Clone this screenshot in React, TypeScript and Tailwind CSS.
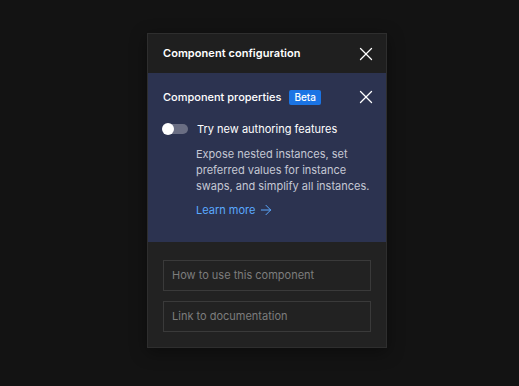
import { X, ArrowRight } from 'lucide-react';

const CloseButton = () => (
  <button className="w-6 h-6 flex items-center justify-center text-white -mr-[6px]">
    <X className="w-[22px] h-[22px]" strokeWidth={1.35} />
  </button>
);

export default function App() {
  return (
    <div
      className="w-[519px] h-[386px] bg-[#131313] pt-[33px] pl-[147px]"
      style={{ fontFamily: 'Inter, "Noto Sans", sans-serif' }}
    >
      <div className="w-[240px] bg-[#222222] border border-[#2e2e2e] shadow-[0_4px_16px_rgba(0,0,0,0.4)]">
        {/* Header */}
        <div className="h-[39px] flex items-center justify-between pl-[15px] pr-[14px] bg-[#1f1f1f]">
          <span className="text-[11px] font-semibold text-white tracking-[0.005em]">Component configuration</span>
          <CloseButton />
        </div>

        {/* Beta notice */}
        <div className="bg-[#2c3350] pl-[15px] pr-[14px] pt-[16px] pb-[24px]">
          <div className="h-4 flex items-center justify-between">
            <div className="flex items-center gap-[8px]">
              <span className="text-[11px] font-medium text-white">Component properties</span>
              <span className="h-[15px] px-[5px] rounded-[2px] bg-[#1b74e4] text-white text-[10px] font-medium flex items-center">
                Beta
              </span>
            </div>
            <CloseButton />
          </div>

          <div className="mt-[16px] h-4 flex items-center">
            <div className="relative w-[25px] h-[10px] rounded-full bg-[#6a6e83]">
              <div className="absolute -left-px -top-px w-[12px] h-[12px] rounded-full bg-white" />
            </div>
            <span className="ml-[9px] text-[11px] text-white">Try new authoring features</span>
          </div>

          <p className="mt-[9px] ml-[33px] text-[11px] leading-[16px] text-[#c5c8d4]">
            Expose nested instances, set preferred values for instance swaps, and simplify all instances.
          </p>

          <a className="mt-[8px] ml-[33px] h-4 flex items-center text-[11px] text-[#5aa9ff]">
            Learn more <ArrowRight className="ml-[3px] w-4 h-4" strokeWidth={1.5} />
          </a>
        </div>

        {/* Inputs */}
        <div className="px-[15px] pt-[18px] pb-[15px] flex flex-col gap-[10px]">
          <div className="h-[31px] border border-[#3a3a3a] flex items-center px-[8px] text-[11px] text-[#7d7d7d]">
            How to use this component
          </div>
          <div className="h-[31px] border border-[#3a3a3a] flex items-center px-[8px] text-[11px] text-[#7d7d7d]">
            Link to documentation
          </div>
        </div>
      </div>
    </div>
  );
}
